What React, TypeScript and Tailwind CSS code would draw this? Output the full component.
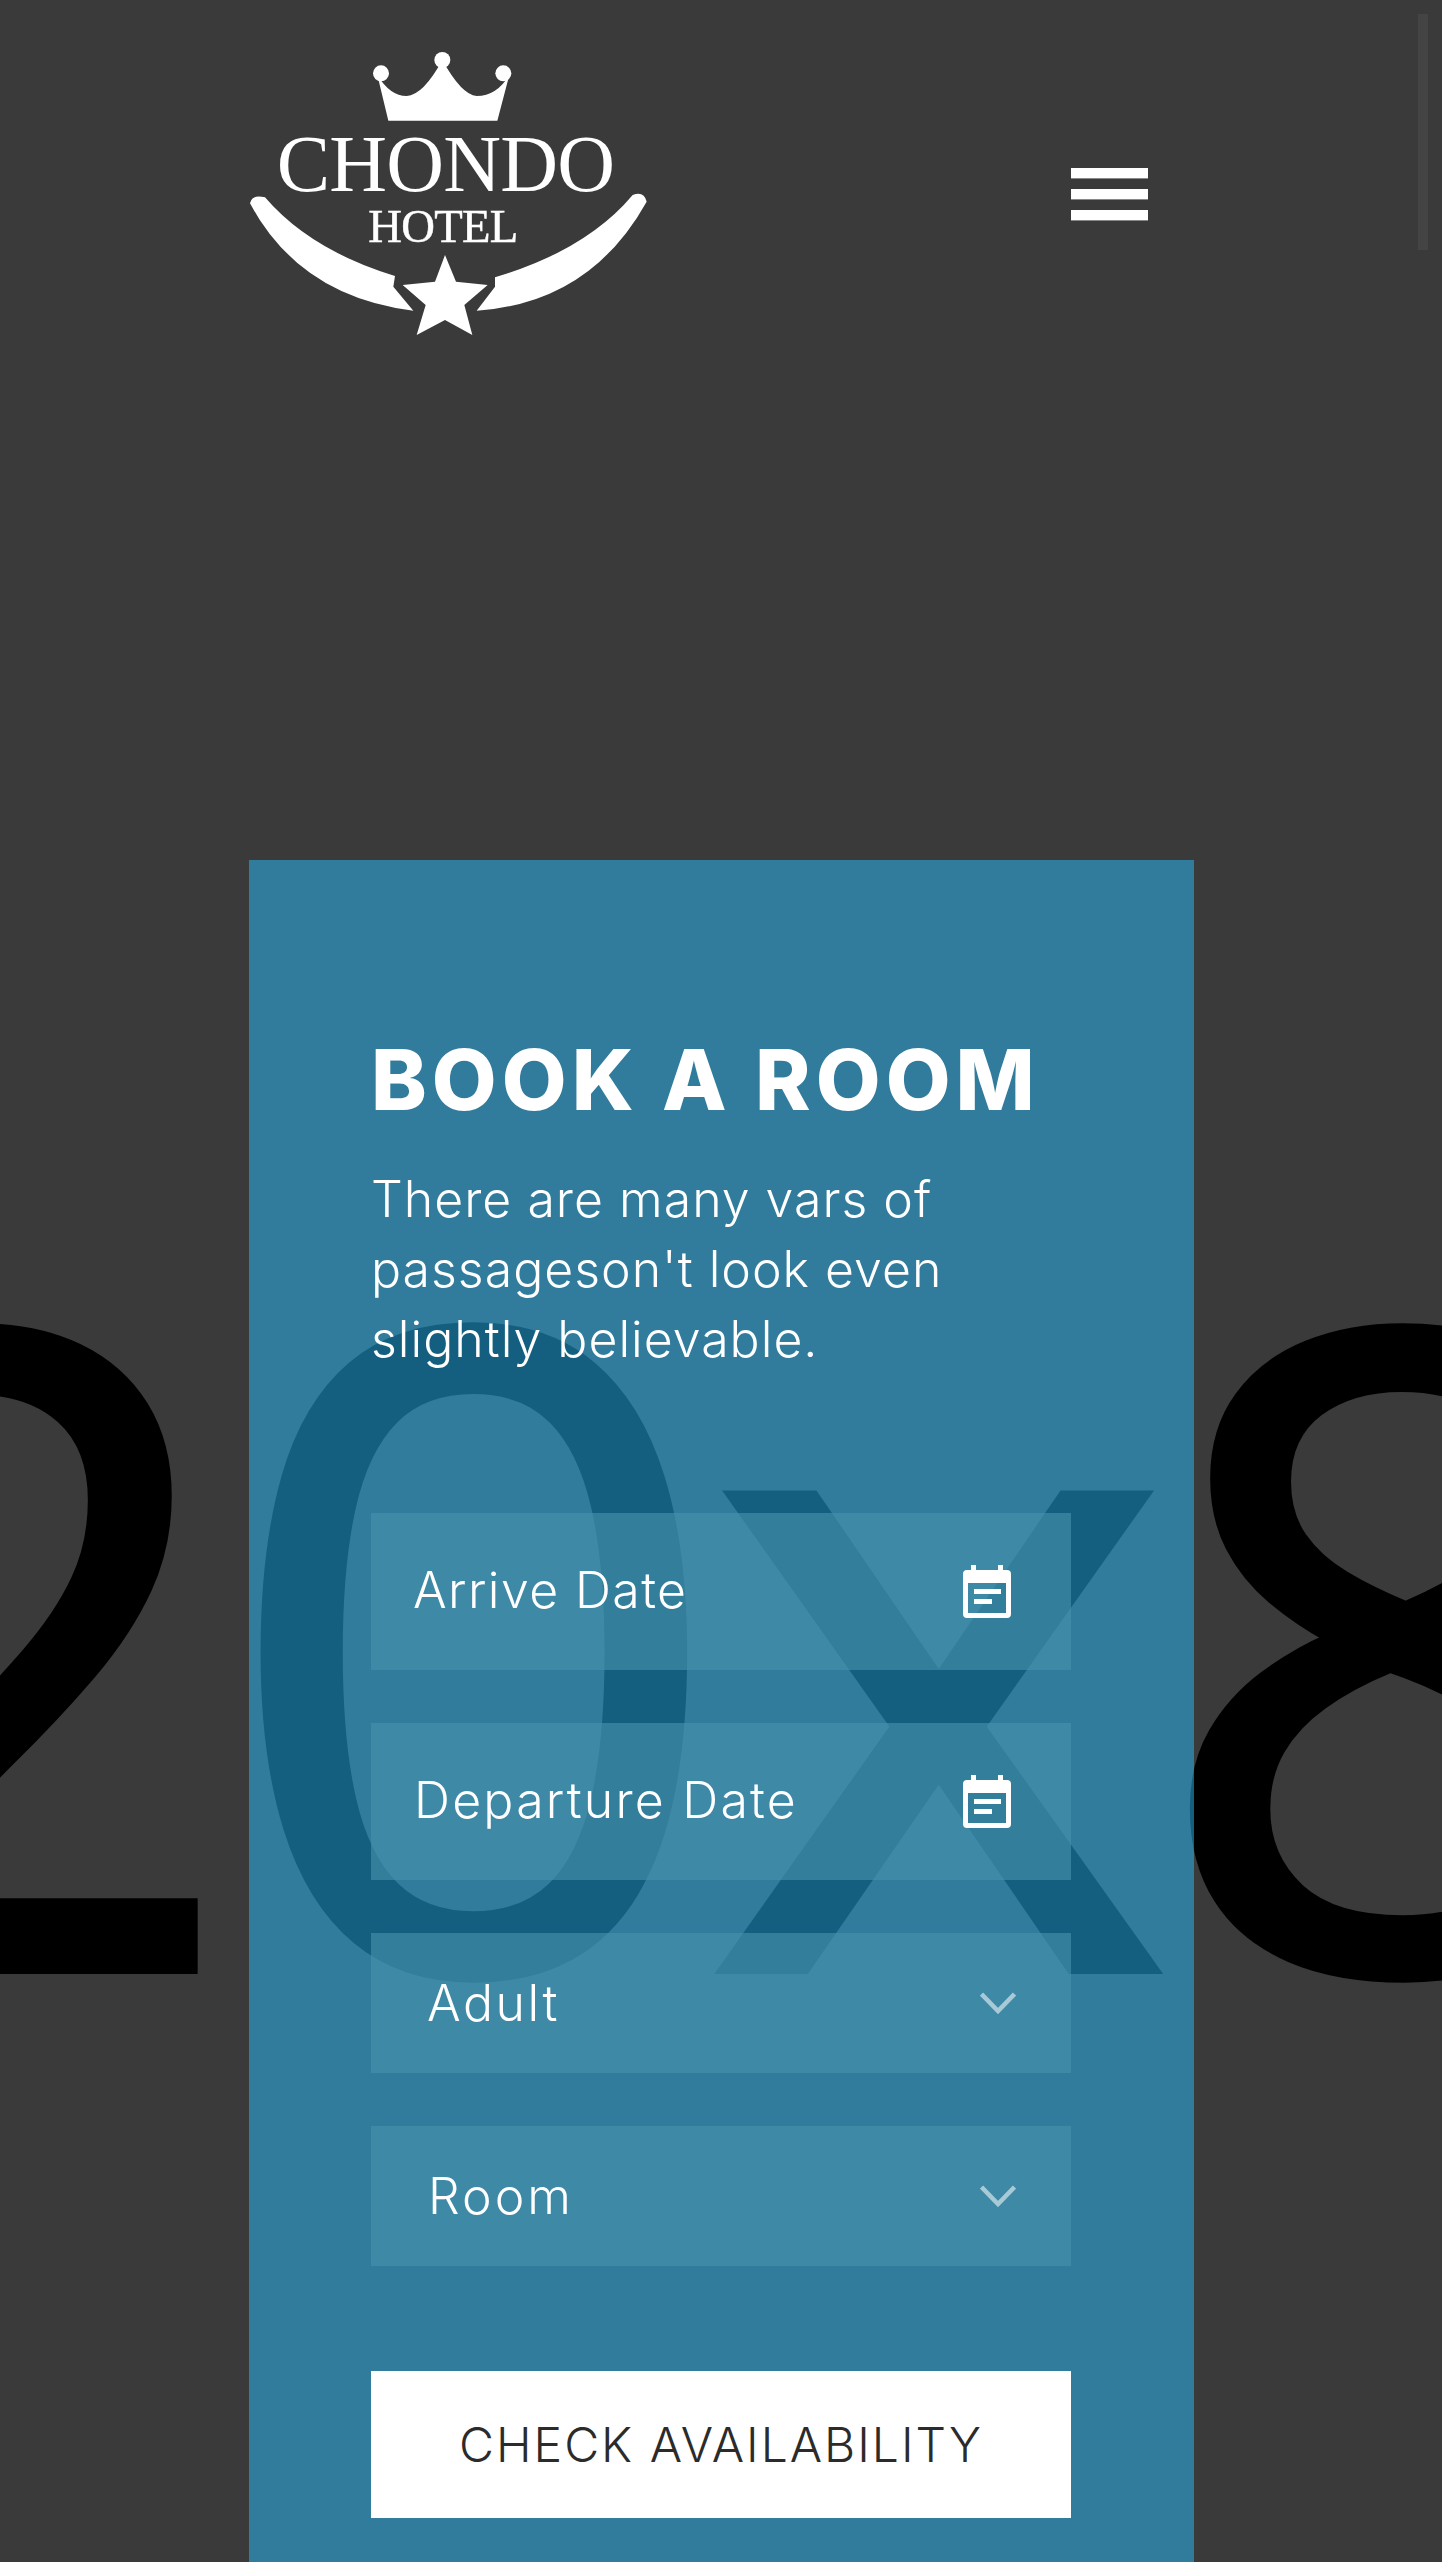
import React from 'react';

const Logo = () => (
  <svg viewBox="0 0 1380 1020" className="w-[460px] h-[340px] blur-[0.7px]" fill="#fff">
    {/* crown */}
    <circle cx="483" cy="160" r="24" />
    <circle cx="667" cy="120" r="24" />
    <circle cx="850" cy="160" r="24" />
    <path d="M472 165 L505 302 L832 302 L868 165 Q830 228 770 228 Q725 225 667 120 Q610 225 560 228 Q510 228 472 165 Z" />
    <text x="170" y="512" fontFamily="'Liberation Serif', serif" fontSize="240" textLength="1015">CHONDO</text>
    <text x="445" y="667" fontFamily="'Liberation Serif', serif" fontSize="140" stroke="#fff" strokeWidth="1.5" textLength="450">HOTEL</text>
    {/* swooshes */}
    <path d="M90 550 Q95 522 135 532 Q270 690 525 768 L520 800 L580 872 Q240 830 90 550 Z" />
    <path d="M1280 545 Q1272 512 1238 525 Q1100 690 825 772 L825 800 L770 872 Q1110 850 1280 545 Z" />
    {/* star */}
    <path d="M675 705 L708 785 L803 795 L733 855 L757 945 L675 900 L590 945 L617 855 L548 795 L645 785 Z" />
  </svg>
);

const CalendarIcon = () => (
  <svg viewBox="0 0 48 53" className="w-12 h-[53px]" fill="#fff">
    <path d="M8 0h5v5h22V0h5v5h4a4 4 0 0 1 4 4v40a4 4 0 0 1-4 4H4a4 4 0 0 1-4-4V9a4 4 0 0 1 4-4h4z M5 18v30h38V18z" fillRule="evenodd" />
    <rect x="11" y="24" width="27" height="5" />
    <rect x="11" y="34" width="18" height="5" />
  </svg>
);

const Chevron = () => (
  <svg viewBox="0 0 36 22" className="w-9 h-[22px]" fill="none" stroke="#fff" strokeOpacity="0.55" strokeWidth="4.5">
    <path d="M1.5 2 L18 19 L34.5 2" />
  </svg>
);

const App = () => {
  return (
    <div className="relative w-[1442px] h-[2562px] overflow-hidden bg-[#3a3a3a] font-['Inter',sans-serif]">
      {/* placeholder number behind the panel */}
      <div className="absolute left-[-1237px] top-[1013px] whitespace-nowrap font-['Open_Sans',sans-serif] font-medium text-[885px] leading-[1225px] tracking-[-20px] text-black [-webkit-text-stroke:10px_black]">
        1920x800
      </div>

      {/* scrollbar */}
      <div className="absolute left-[1418px] top-[14px] w-[10px] h-[236px] bg-[#444444]" />

      <div className="relative">
        <header className="h-[860px] flex items-start pl-[220px] pt-[20px]">
          <Logo />
          <div className="ml-[391px] mt-[148px] flex flex-col gap-[10px] w-[77px]">
            <span className="h-[11px] bg-white border-b border-[#888888]" />
            <span className="h-[11px] bg-white border-b border-[#888888]" />
            <span className="h-[11px] bg-white border-b border-[#888888]" />
          </div>
        </header>

        <main className="ml-[249px] w-[945px] h-[1702px] bg-[#28bdfe]/50 pl-[122px] pr-[123px] pt-[173px]">
          <h1 className="text-[84px] leading-[94px] font-extrabold text-white tracking-[5px]">BOOK A ROOM</h1>
          <p className="mt-[37px] text-[50px] leading-[70px] font-light text-white tracking-[1px]">
            There are many vars of<br />passageson't look even<br />slightly believable.
          </p>

          <div className="mt-[139px] flex flex-col">
            <div className="h-[157px] bg-[#4793ae]/60 flex items-center justify-between pl-[42px] pr-[60px]">
              <span className="text-[50px] font-light text-white tracking-[1.4px] -mt-[2px]">Arrive Date</span>
              <CalendarIcon />
            </div>
            <div className="mt-[53px] h-[157px] bg-[#4793ae]/60 flex items-center justify-between pl-[43px] pr-[60px]">
              <span className="text-[50px] font-light text-white tracking-[2.2px] -mt-[2px]">Departure Date</span>
              <CalendarIcon />
            </div>
            <div className="mt-[53px] h-[140px] bg-[#4793ae]/60 flex items-center justify-between pl-[56px] pr-[55px]">
              <span className="text-[50px] font-light text-white tracking-[2.5px]">Adult</span>
              <Chevron />
            </div>
            <div className="mt-[53px] h-[140px] bg-[#4793ae]/60 flex items-center justify-between pl-[57px] pr-[55px]">
              <span className="text-[50px] font-light text-white tracking-[3px]">Room</span>
              <Chevron />
            </div>
            <button className="mt-[105px] h-[147px] bg-white text-[#2b2b2b] text-[48px] font-light tracking-[2px]">
              CHECK AVAILABILITY
            </button>
          </div>
        </main>
      </div>
    </div>
  );
};

export default App;
